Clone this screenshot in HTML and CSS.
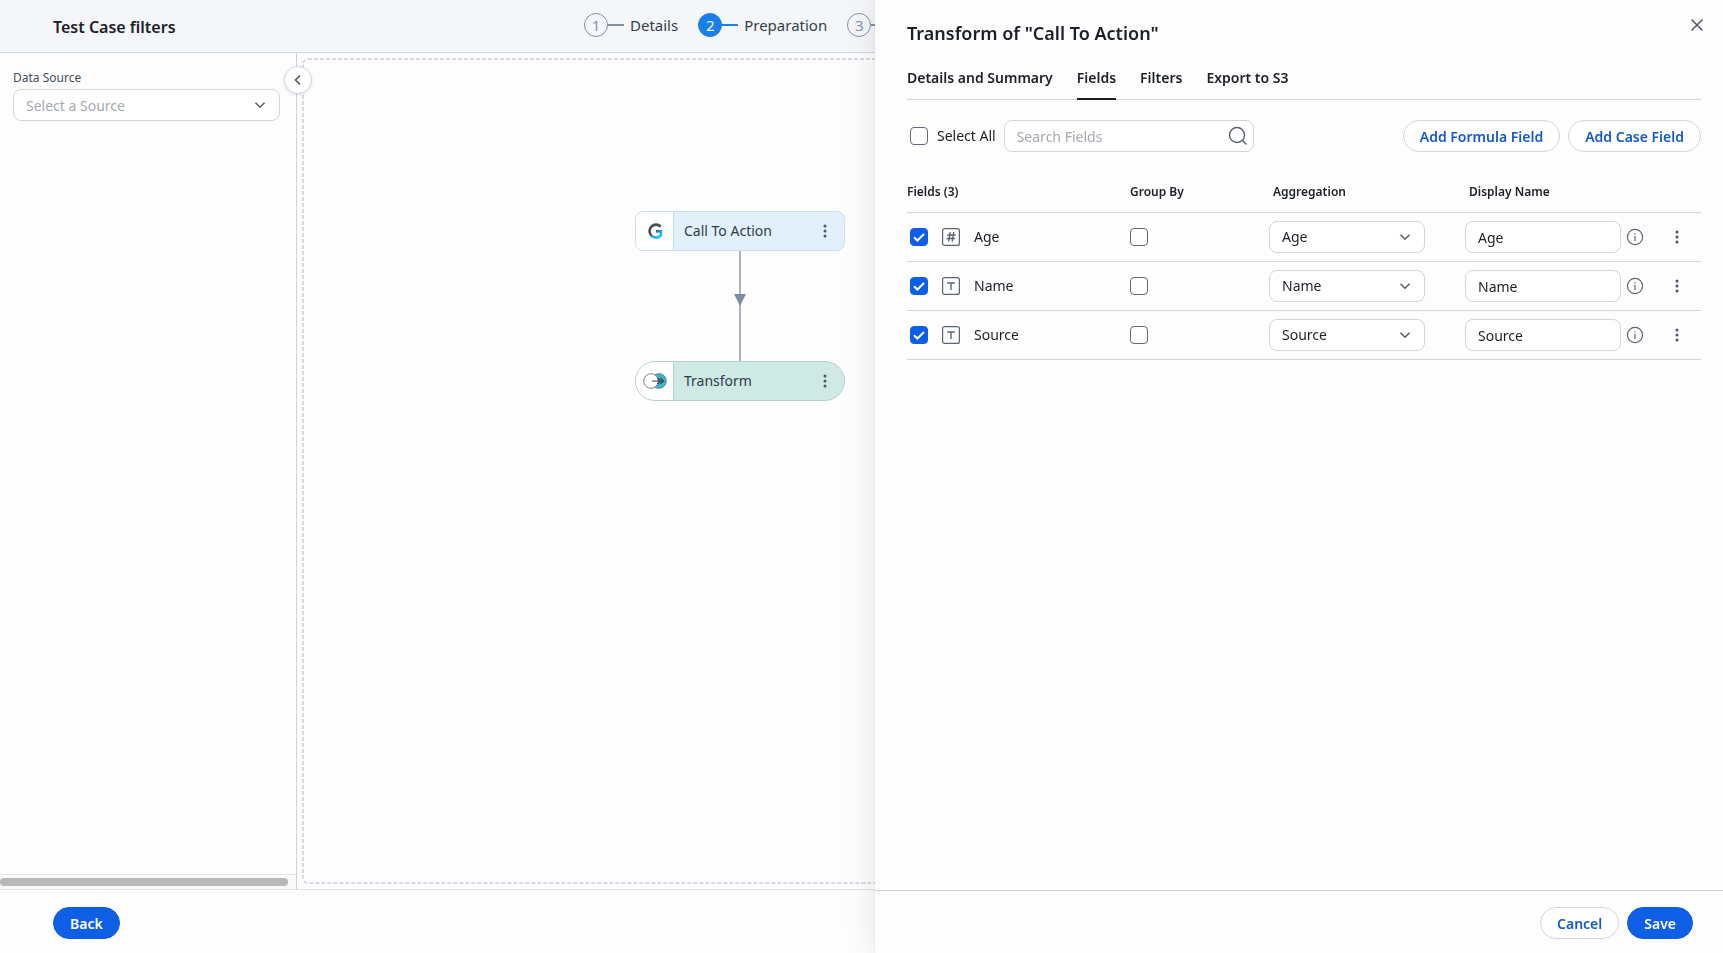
FILE: index.html
```
<!DOCTYPE html>
<html lang="en">
<head>
    <meta charset="UTF-8">
    <meta name="viewport" content="width=device-width, initial-scale=1.0">
    <title>Test Case filters</title>
    <link rel="stylesheet" href="styles.css">
</head>
<body>
    <svg class="sprite" aria-hidden="true">
        <symbol id="chevron" viewBox="0 0 12 12"><path d="M1.5 3.8 6 8.2l4.500-4.400" fill="none" stroke="currentColor" stroke-width="1.6"/></symbol>
        <symbol id="dots" viewBox="0 0 4 16"><circle cx="2" cy="3" r="1.500"/><circle cx="2" cy="8" r="1.500"/><circle cx="2" cy="13" r="1.500"/></symbol>
        <symbol id="info" viewBox="0 0 18 18"><circle cx="9" cy="9" r="7.600" fill="none" stroke="currentColor" stroke-width="1.200"/><path d="M9 8v5M9 5.200v1.400" stroke="currentColor" stroke-width="1.200"/></symbol>
        <symbol id="type-number" viewBox="0 0 18 18"><rect x=".6" y=".6" width="16.800" height="16.800" rx="2" fill="none" stroke="currentColor" stroke-width="1.200"/><path d="M8.200 4 6.600 13.500M11.800 4l-1.600 9.500M5.200 7h8.400M4.600 10.500H13" fill="none" stroke="currentColor" stroke-width="1.400"/></symbol>
        <symbol id="type-text" viewBox="0 0 18 18"><rect x=".6" y=".6" width="16.800" height="16.800" rx="2" fill="none" stroke="currentColor" stroke-width="1.200"/><path d="M5.200 6h7.600M9 6v7" fill="none" stroke="currentColor" stroke-width="1.400"/></symbol>
    </svg>

    <div class="page">
        <header class="header">
            <h1 class="header-title">Test Case filters</h1>
            <ol class="steps">
                <li class="step"><span class="step-number">1</span><span class="step-line"></span>Details</li>
                <li class="step active"><span class="step-number">2</span><span class="step-line"></span>Preparation</li>
                <li class="step"><span class="step-number">3</span><span class="step-line"></span></li>
            </ol>
        </header>

        <main class="main">
            <aside class="sidebar">
                <div class="source-field">
                    <label for="dataSource" class="source-label">Data Source</label>
                    <div class="select-wrap">
                        <select id="dataSource" class="control placeholder"><option>Select a Source</option></select>
                        <svg class="chevron"><use href="#chevron"/></svg>
                    </div>
                </div>
                <div class="scroll-track"><div class="scroll-thumb"></div></div>
                <button type="button" class="collapse" aria-label="Collapse">
                    <svg width="12" height="12" viewBox="0 0 12 12"><path d="M8 1.500 3.500 6 8 10.500" fill="none" stroke="currentColor" stroke-width="1.600"/></svg>
                </button>
            </aside>
            <section class="canvas">
                <svg class="canvas-frame"><rect x="1" y="1" width="100%" height="100%" rx="5"/></svg>
                <div class="flow">
                    <div class="node source">
                        <span class="node-icon">
                            <svg width="16" height="16" viewBox="0 0 16 16">
                                <defs>
                                    <linearGradient id="logoFill" gradientUnits="userSpaceOnUse" x1="7" y1="4" x2="13" y2="13">
                                        <stop offset=".35" stop-color="#4a4d52"/>
                                        <stop offset=".65" stop-color="#1fa0ea"/>
                                        <stop offset="1" stop-color="#25c3f5"/>
                                    </linearGradient>
                                </defs>
                                <path d="M13.700 3.600A6.500 6.500 0 1 0 13.900 12.400V8.400H9" fill="none" stroke="url(#logoFill)" stroke-width="2.600"/>
                            </svg>
                        </span>
                        <span class="node-name">Call To Action</span>
                        <button type="button" class="menu" aria-label="Call To Action menu"><svg width="4" height="16"><use href="#dots"/></svg></button>
                    </div>
                    <svg class="connector" width="12" height="110" viewBox="0 0 12 110">
                        <path d="M6 0v110" stroke="#a9b4c0" stroke-width="2"/>
                        <path d="M0 43h12L6 55z" fill="#7b8da5"/>
                    </svg>
                    <div class="node transform">
                        <span class="node-icon">
                            <svg width="24" height="16" viewBox="0 0 24 16">
                                <circle cx="16" cy="8" r="7.300" fill="#3fb6c8" stroke="#3c6f7c" stroke-width=".8"/>
                                <circle cx="8" cy="8" r="7.300" fill="#fff" stroke="#6b7580" stroke-width=".9"/>
                                <path d="M9 8h11.500M14.500 5 17.500 8l-3 3M17.500 5 20.500 8l-3 3" fill="none" stroke="#2f4654" stroke-width="1.200"/>
                            </svg>
                        </span>
                        <span class="node-name">Transform</span>
                        <button type="button" class="menu" aria-label="Transform menu"><svg width="4" height="16"><use href="#dots"/></svg></button>
                    </div>
                </div>
            </section>
        </main>

        <footer class="footer">
            <button type="button" class="button primary">Back</button>
        </footer>
    </div>

    <div class="drawer" role="dialog" aria-labelledby="drawerTitle">
        <div class="drawer-body">
            <div class="drawer-head">
                <h2 id="drawerTitle">Transform of "Call To Action"</h2>
                <button type="button" class="close" aria-label="Close">
                    <svg width="14" height="14" viewBox="0 0 14 14"><path d="M1.500 1.500l11 11M12.500 1.500l-11 11" stroke="currentColor" stroke-width="1.500"/></svg>
                </button>
            </div>
            <nav class="tabs">
                <a href="#summary">Details and Summary</a>
                <a href="#fields" class="active">Fields</a>
                <a href="#filters">Filters</a>
                <a href="#export">Export to S3</a>
            </nav>
            <div class="toolbar">
                <label class="select-all"><input type="checkbox" class="checkbox">Select All</label>
                <div class="search">
                    <input type="text" class="control" placeholder="Search Fields" aria-label="Search Fields">
                    <svg class="search-icon" width="20" height="20" viewBox="0 0 20 20"><circle cx="9" cy="9" r="7.500" fill="none" stroke="currentColor" stroke-width="1.400"/><path d="M14.300 14.300 18.500 18.500" stroke="currentColor" stroke-width="1.400"/></svg>
                </div>
                <button type="button" class="button">Add Formula Field</button>
                <button type="button" class="button">Add Case Field</button>
            </div>
            <table class="fields">
                <colgroup><col class="col-name"><col class="col-group"><col class="col-aggregation"><col></colgroup>
                <thead>
                    <tr><th>Fields (3)</th><th>Group By</th><th class="inset">Aggregation</th><th class="inset">Display Name</th></tr>
                </thead>
                <tbody>
                    <tr>
                        <td><label class="field-name"><input type="checkbox" class="checkbox" checked><svg class="type"><use href="#type-number"/></svg>Age</label></td>
                        <td><input type="checkbox" class="checkbox" aria-label="Group by Age"></td>
                        <td><div class="select-wrap cell"><select class="control" aria-label="Age aggregation"><option>Age</option></select><svg class="chevron"><use href="#chevron"/></svg></div></td>
                        <td><div class="display-name"><input type="text" class="control cell" value="Age" aria-label="Age display name"><svg class="info"><use href="#info"/></svg><button type="button" class="menu" aria-label="Age menu"><svg width="4" height="16"><use href="#dots"/></svg></button></div></td>
                    </tr>
                    <tr>
                        <td><label class="field-name"><input type="checkbox" class="checkbox" checked><svg class="type"><use href="#type-text"/></svg>Name</label></td>
                        <td><input type="checkbox" class="checkbox" aria-label="Group by Name"></td>
                        <td><div class="select-wrap cell"><select class="control" aria-label="Name aggregation"><option>Name</option></select><svg class="chevron"><use href="#chevron"/></svg></div></td>
                        <td><div class="display-name"><input type="text" class="control cell" value="Name" aria-label="Name display name"><svg class="info"><use href="#info"/></svg><button type="button" class="menu" aria-label="Name menu"><svg width="4" height="16"><use href="#dots"/></svg></button></div></td>
                    </tr>
                    <tr>
                        <td><label class="field-name"><input type="checkbox" class="checkbox" checked><svg class="type"><use href="#type-text"/></svg>Source</label></td>
                        <td><input type="checkbox" class="checkbox" aria-label="Group by Source"></td>
                        <td><div class="select-wrap cell"><select class="control" aria-label="Source aggregation"><option>Source</option></select><svg class="chevron"><use href="#chevron"/></svg></div></td>
                        <td><div class="display-name"><input type="text" class="control cell" value="Source" aria-label="Source display name"><svg class="info"><use href="#info"/></svg><button type="button" class="menu" aria-label="Source menu"><svg width="4" height="16"><use href="#dots"/></svg></button></div></td>
                    </tr>
                </tbody>
            </table>
        </div>
        <div class="drawer-footer">
            <button type="button" class="button">Cancel</button>
            <button type="button" class="button primary">Save</button>
        </div>
    </div>
</body>
</html>
```
FILE: styles.css
```
* {
    box-sizing: border-box;
}
body {
    margin: 0;
    font-family: "Noto Sans", sans-serif;
    font-size: 14px;
    line-height: 20px;
    color: #1b1f26;
    background-color: #fdfdfe;
    overflow: hidden;
}
button, input, select {
    font: inherit;
    color: inherit;
    margin: 0;
}
button {
    cursor: pointer;
}
svg {
    display: block;
    flex-shrink: 0;
}
.sprite {
    position: absolute;
    width: 0;
    height: 0;
}
.page {
    height: 100vh;
    display: flex;
    flex-direction: column;
}

/* header */
.header {
    display: flex;
    align-items: center;
    height: 53px;
    padding: 2px 0 0 53px;
    background-color: #f5f6f9;
    border-bottom: 1px solid #cfd6e3;
}
.header-title {
    flex: 0 0 531px;
    margin: 0;
    font-size: 16px;
    font-weight: 600;
    line-height: 24px;
}
.steps {
    display: flex;
    gap: 20px;
    margin: 0;
    padding: 0 0 4px;
    list-style: none;
    font-size: 15px;
    color: #333f4b;
}
.step {
    display: flex;
    align-items: center;
}
.step-number {
    width: 24px;
    height: 24px;
    border: 1px solid #8094a8;
    border-radius: 50%;
    line-height: 22px;
    text-align: center;
    color: #8094a8;
}
.step-line {
    width: 16px;
    height: 2px;
    margin-right: 6px;
    background-color: #8094a8;
}
.step.active .step-number {
    color: #fff;
    background-color: #1a7fe8;
    border-color: #1a7fe8;
}
.step.active .step-line {
    background-color: #1a7fe8;
}

/* sidebar */
.main {
    flex: 1;
    display: flex;
    min-height: 0;
}
.sidebar {
    position: relative;
    z-index: 1;
    width: 297px;
    display: flex;
    flex-direction: column;
    justify-content: space-between;
    border-right: 1px solid #cdd0d8;
}
.source-field {
    padding: 17px 16px 0 13px;
}
.source-label {
    display: block;
    margin-bottom: 3px;
    font-size: 12px;
    line-height: 16px;
    color: #454d59;
}
.scroll-track {
    padding: 3px 8px 3px 0;
    background-color: #fafafa;
    border-top: 1px solid #e4e4e6;
}
.scroll-thumb {
    height: 8px;
    border-radius: 4px;
    background-color: #b8b8b8;
}
.collapse {
    position: absolute;
    top: 13px;
    right: -16px;
    width: 28px;
    height: 28px;
    padding: 0;
    display: flex;
    align-items: center;
    justify-content: center;
    color: #4b5563;
    background-color: #fff;
    border: 1px solid #d3d7e0;
    border-radius: 50%;
    box-shadow: 0 1px 3px rgba(40, 60, 100, 0.15);
}

/* form controls */
.control {
    display: block;
    width: 100%;
    height: 32px;
    padding: 1px 12px 0;
    background-color: #fff;
    border: 1px solid #d3d5d9;
    border-radius: 8px;
    appearance: none;
}
.control::placeholder,
.control.placeholder {
    color: #a5a9b1;
    opacity: 1;
}
.select-wrap {
    position: relative;
}
.chevron {
    position: absolute;
    top: 10px;
    right: 14px;
    width: 12px;
    height: 12px;
    color: #56606d;
    pointer-events: none;
}
.checkbox {
    display: block;
    flex-shrink: 0;
    width: 18px;
    height: 18px;
    appearance: none;
    background-color: #fff;
    border: 1px solid #5f6977;
    border-radius: 4px;
}
.checkbox:checked {
    background: #0f5fe6 url("data:image/svg+xml,%3Csvg xmlns='http://www.w3.org/2000/svg' viewBox='0 0 18 18'%3E%3Cpath d='M4 9.200l3.400 3.300L14 6' fill='none' stroke='white' stroke-width='2'/%3E%3C/svg%3E") center / 18px 18px;
    border-color: #0f5fe6;
}
.button {
    height: 32px;
    padding: 2px 16px 0;
    font-weight: 600;
    color: #1459cf;
    background-color: #fff;
    border: 1px solid #d3d5d9;
    border-radius: 16px;
    white-space: nowrap;
}
.button.primary {
    color: #fff;
    background-color: #0f5fe6;
    border-color: #0f5fe6;
}
.menu {
    padding: 0 4px;
    background: none;
    border: none;
    fill: #4b5563;
}

/* canvas */
.canvas {
    position: relative;
    flex: 1;
    padding: 5px;
    overflow: hidden;
}
.canvas-frame {
    width: 100%;
    height: 100%;
}
.canvas-frame rect {
    height: calc(100% - 2px);
    fill: none;
    stroke: #d2dbe5;
    stroke-width: 2;
    stroke-dasharray: 4 2;
}
.flow {
    position: absolute;
    top: 158px;
    left: 338px;
    width: 210px;
    display: flex;
    flex-direction: column;
    align-items: center;
}
.node {
    display: flex;
    align-items: center;
    width: 100%;
    height: 40px;
    padding-right: 13px;
    color: #2f3b4a;
    border: 1px solid;
    overflow: hidden;
}
.node.source {
    background-color: #e2f0fc;
    border-color: #c8dff0;
    border-radius: 8px;
}
.node.transform {
    background-color: #cfeae5;
    border-color: #b4cfd0;
    border-radius: 20px;
}
.node-icon {
    display: flex;
    align-items: center;
    justify-content: center;
    width: 38px;
    height: 38px;
    background-color: #fff;
    border-right: 1px solid;
    border-color: inherit;
}
.node-name {
    flex: 1;
    padding-left: 10px;
}

/* drawer */
.drawer {
    position: fixed;
    top: 0;
    right: 0;
    bottom: 0;
    z-index: 2;
    width: 848px;
    max-width: 100%;
    display: flex;
    flex-direction: column;
    background-color: #fdfdfe;
    box-shadow: 0 0 32px rgba(0, 0, 0, 0.1), 0 0 2px rgba(0, 0, 0, 0.1);
}
.drawer-body {
    flex: 1;
    padding: 20px 22px 0 32px;
}
.drawer-head {
    display: flex;
    justify-content: space-between;
    align-items: flex-start;
}
.drawer-head h2 {
    margin: 0;
    font-size: 18px;
    font-weight: 600;
    line-height: 26px;
}
.close {
    margin: -2px -3px 0 0;
    padding: 0;
    color: #4b5563;
    background: none;
    border: none;
}
.tabs {
    display: flex;
    gap: 24px;
    margin-top: 22px;
    border-bottom: 1px solid #d3d5d9;
}
.tabs a {
    margin-bottom: -1px;
    padding-bottom: 10px;
    font-weight: 600;
    color: inherit;
    text-decoration: none;
    border-bottom: 2px solid transparent;
}
.tabs a.active {
    border-color: #1b1f26;
}
.toolbar {
    display: flex;
    align-items: center;
    gap: 8px;
    margin-top: 20px;
}
.select-all {
    display: flex;
    align-items: center;
    gap: 9px;
    padding-left: 3px;
}
.search {
    position: relative;
    width: 250px;
    margin-right: auto;
}
.search-icon {
    position: absolute;
    top: 6px;
    right: 6px;
    color: #56606d;
}
.fields {
    width: 100%;
    margin-top: 20px;
    table-layout: fixed;
    border-collapse: collapse;
}
.col-name {
    width: 223px;
}
.col-group {
    width: 139px;
}
.col-aggregation {
    width: 196px;
}
.fields th {
    height: 40px;
    padding: 1px 0 0;
    font-size: 12px;
    font-weight: 600;
    text-align: left;
}
.fields th.inset {
    padding-left: 4px;
}
.fields td {
    height: 49px;
    padding: 0;
}
.fields tr {
    border-bottom: 1px solid #d3d5d9;
}
.field-name {
    display: flex;
    align-items: center;
    padding-left: 3px;
}
.type {
    width: 18px;
    height: 18px;
    margin: 0 14px;
    color: #5b6572;
}
.cell {
    width: 156px;
}
.display-name {
    display: flex;
    align-items: center;
}
.info {
    width: 18px;
    height: 18px;
    margin: 0 auto 0 5px;
    color: #5b6572;
}
.display-name .menu {
    margin-right: 18px;
}
.drawer-footer {
    display: flex;
    justify-content: flex-end;
    gap: 8px;
    padding: 16px 30px 14px;
    border-top: 1px solid #cdcfd4;
}

/* footer */
.footer {
    padding: 17px 53px 14px;
    border-top: 1px solid #dfe2e7;
}
```
